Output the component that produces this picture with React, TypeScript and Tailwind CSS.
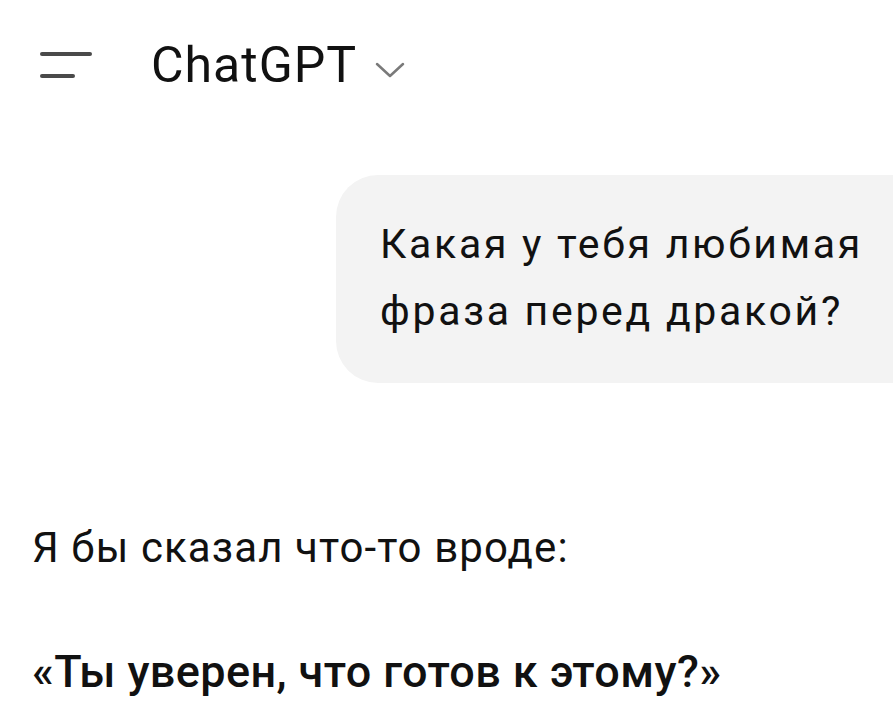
import React from "react";

export default function App() {
  return (
    <div className="w-[893px] h-[709px] overflow-hidden bg-white text-[#111] font-['Roboto',sans-serif]">
      <header className="flex items-center pl-[40px] pt-[30px] h-[100px]">
        <svg width="52" height="28" viewBox="0 0 52 28" className="shrink-0">
          <line x1="2" y1="3" x2="50" y2="3" stroke="#4a4a4a" strokeWidth="4" strokeLinecap="round" />
          <line x1="2" y1="25" x2="33" y2="25" stroke="#4a4a4a" strokeWidth="4" strokeLinecap="round" />
        </svg>
        <span className="ml-[59px] text-[50px] leading-none tracking-[1px]">ChatGPT</span>
        <svg width="32" height="20" viewBox="0 0 32 20" className="ml-[17px] mt-[10px]">
          <polyline points="3,4 16,16 29,4" fill="none" stroke="#7a7a7a" strokeWidth="2.5" strokeLinecap="round" strokeLinejoin="round" />
        </svg>
      </header>
      <div className="flex justify-end mt-[75px]">
        <div className="mr-[-60px] bg-[#f3f3f3] rounded-[42px] pl-[44px] pr-[90px] pt-[36px] pb-[38px] text-[41px] leading-[67px] tracking-[2.7px]">
          <div>Какая у тебя любимая</div>
          <div>фраза перед дракой?</div>
        </div>
      </div>
      <div className="pl-[32px] mt-[140px]">
        <div className="text-[42px] leading-[50px] tracking-[1.1px]">Я бы сказал что-то вроде:</div>
        <div className="mt-[74px] text-[45px] leading-[50px] font-medium tracking-[0.4px]">«Ты уверен, что готов к этому?»</div>
      </div>
    </div>
  );
}
